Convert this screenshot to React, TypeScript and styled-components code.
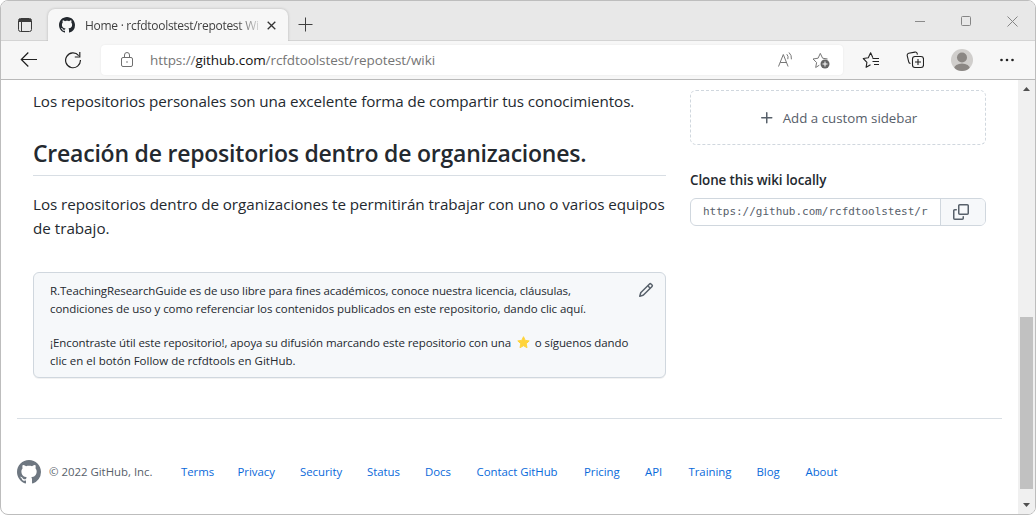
import React from "react";
import styled, { createGlobalStyle } from "styled-components";

const ui = `"Segoe UI", "Open Sans", "Noto Sans", sans-serif`;

const GlobalStyle = createGlobalStyle`
  * { box-sizing: border-box; }
  body { margin: 0; background: #fff; font-family: ${ui}; }
`;

const Window = styled.div`
  display: flex;
  flex-direction: column;
  width: 1036px;
  height: 515px;
  border: 1px solid #bdbdbd;
  border-radius: 8px;
  overflow: hidden;
  background: #fff;
`;

const TitleBar = styled.header`
  display: flex;
  align-items: flex-end;
  height: 40px;
  background: #e8e8e8;
  border-bottom: 1px solid #d4d4d4;
`;

const TabActions = styled.div`
  width: 47px;
  height: 100%;
  padding: 16px 0 0 16px;
  svg { display: block; }
`;

const Tab = styled.div`
  display: flex;
  align-items: center;
  width: 240px;
  height: 32px;
  margin-bottom: -1px;
  padding: 0 11px 0 11px;
  border-radius: 7px 7px 0 0;
  background: #f7f7f7;
  box-shadow: 0 0 3px rgba(0, 0, 0, 0.22);
  clip-path: inset(-4px -4px 0 -4px);
`;

const TabTitle = styled.span`
  width: 174px;
  margin: 0 8px 0 10px;
  white-space: nowrap;
  font-size: 12px;
  letter-spacing: -0.28px;
  color: #404040;
  mask-image: linear-gradient(90deg, #000 152px, transparent 178px);
`;

const NewTab = styled.div`
  display: flex;
  height: 100%;
  padding: 16px 0 0 10px;
`;

const Caption = styled.div`
  display: flex;
  gap: 36px;
  height: 100%;
  margin-left: auto;
  padding: 15px 17px 0 0;
`;

const Toolbar = styled.div`
  display: flex;
  align-items: center;
  flex: none;
  height: 39px;
  padding: 0 20px 1px 19px;
  background: #f7f7f7;
  border-bottom: 1px solid #b9b9b9;
`;

const NavButtons = styled.div`
  display: flex;
  gap: 26px;
  width: 81px;
`;

const AddressBar = styled.div`
  display: flex;
  align-items: center;
  width: 742px;
  height: 30px;
  padding: 0 13px 0 18px;
  border-radius: 4px;
  background: #fff;
  box-shadow: 0 0 2px rgba(0, 0, 0, 0.08);
`;

const Url = styled.div`
  flex: 1;
  margin-left: 15px;
  font-size: 13.5px;
  letter-spacing: -0.08px;
  color: #757575;
  b { font-weight: 400; color: #111; }
`;

const AddressIcons = styled.div`
  display: flex;
  gap: 17px;
`;

const ToolbarIcons = styled.div`
  display: flex;
  align-items: center;
  justify-content: space-between;
  flex: 1;
  margin-left: 19px;
`;

const Viewport = styled.div`
  display: flex;
  flex: 1;
  min-height: 0;
`;

const Page = styled.main`
  flex: 1;
  padding: 10px 16px 0;
  color: #24292f;
`;

const Wiki = styled.div`
  display: flex;
  gap: 24px;
  height: 328px;
  padding: 0 16px;
`;

const Article = styled.article`
  width: 633px;
  margin-top: -1px;
`;

const Paragraph = styled.p<{ $track?: number }>`
  margin: 0;
  font-size: 15.2px;
  line-height: 24px;
  white-space: nowrap;
  letter-spacing: ${(p) => p.$track ?? 0}px;
`;

const Heading = styled.h2`
  margin: 25px 0 16px;
  padding-bottom: 7px;
  border-bottom: 1px solid #d8dee4;
  font-size: 23px;
  font-weight: 600;
  line-height: 30px;
  letter-spacing: -0.22px;
  white-space: nowrap;
`;

const Note = styled.section`
  display: flex;
  justify-content: space-between;
  height: 106px;
  margin-top: 32px;
  padding: 9px 11px 0 16px;
  border: 1px solid #d0d7de;
  border-radius: 6px;
  background: #f6f8fa;
  box-shadow: 0 1px 0 rgba(27, 31, 36, 0.06);
`;

const NoteText = styled.p`
  margin: 0 0 16px;
  font-size: 11.5px;
  line-height: 18px;
  white-space: nowrap;
`;

const Line = styled.span<{ $track: number }>`
  display: block;
  letter-spacing: ${(p) => p.$track}px;
  svg { display: inline-block; margin: 0 2px 0 3px; vertical-align: -2px; }
`;

const Sidebar = styled.aside`
  width: 296px;
`;

const AddSidebar = styled.div`
  display: flex;
  align-items: center;
  justify-content: center;
  gap: 8px;
  height: 55px;
  color: #57606a;
  font-size: 13.3px;
  border: 1px dashed #d0d7de;
  border-radius: 6px;
`;

const SidebarTitle = styled.h5`
  margin: 25px 0 8px;
  font-size: 13.4px;
  line-height: 20px;
  font-weight: 600;
  letter-spacing: -0.08px;
`;

const CloneField = styled.div`
  display: flex;
  height: 28px;
  border: 1px solid #d0d7de;
  border-radius: 6px;
  overflow: hidden;
`;

const CloneUrl = styled.div`
  flex: 1;
  padding-left: 12px;
  font: 11px/26px "DejaVu Sans Mono", monospace;
  letter-spacing: -0.02px;
  color: #57606a;
`;

const CopyButton = styled.div`
  display: flex;
  align-items: center;
  width: 45px;
  padding-left: 12px;
  border-left: 1px solid #d0d7de;
  background: #f6f8fa;
`;

const Footer = styled.footer`
  display: flex;
  align-items: center;
  height: 107px;
  border-top: 1px solid #d8dee4;
  font-size: 11.4px;
  color: #57606a;
`;

const Copyright = styled.span`
  width: 132px;
  margin-left: 8px;
  padding-bottom: 2px;
  white-space: nowrap;
`;

const FooterLink = styled.a<{ $w: number }>`
  width: ${(p) => p.$w}px;
  padding-bottom: 2px;
  color: #0969da;
  letter-spacing: -0.03px;
  white-space: nowrap;
`;

const Scrollbar = styled.div`
  display: flex;
  flex-direction: column;
  align-items: center;
  justify-content: space-between;
  width: 17px;
  padding: 7px 0;
  background: #f0f0f0;
`;

const Thumb = styled.div`
  width: 13px;
  height: 172px;
  margin-top: 212px;
  background: #c1c1c1;
`;

const GITHUB =
  "M8 0C3.58 0 0 3.58 0 8c0 3.54 2.29 6.53 5.47 7.59.4.07.55-.17.55-.38 0-.19-.01-.82-.01-1.49-2.01.37-2.53-.49-2.69-.94-.09-.23-.48-.94-.82-1.13-.28-.15-.68-.52-.01-.53.63-.01 1.08.58 1.23.82.72 1.21 1.87.87 2.33.66.07-.52.28-.87.51-1.07-1.78-.2-3.64-.89-3.64-3.95 0-.87.31-1.59.82-2.15-.08-.2-.36-1.02.08-2.12 0 0 .67-.21 2.2.82.64-.18 1.32-.27 2-.27.68 0 1.36.09 2 .27 1.53-1.04 2.2-.82 2.2-.82.44 1.1.16 1.92.08 2.12.51.56.82 1.27.82 2.15 0 3.07-1.87 3.75-3.65 3.95.29.25.54.73.54 1.48 0 1.07-.01 1.93-.01 2.2 0 .21.15.46.55.38A8.013 8.013 0 0016 8c0-4.42-3.58-8-8-8z";

const IconBox = styled.svg`
  flex: none;
`;

const Octicon = ({ d, size = 16, color }: { d: string; size?: number; color: string }) => (
  <IconBox width={size} height={size} viewBox="0 0 16 16" fill={color} fillRule="evenodd">
    <path d={d} />
  </IconBox>
);

const PENCIL =
  "M11.013 1.427a1.75 1.75 0 012.474 0l1.086 1.086a1.75 1.75 0 010 2.474l-8.61 8.61c-.21.21-.47.364-.756.445l-3.251.93a.75.75 0 01-.927-.928l.929-3.25a1.75 1.75 0 01.445-.758l8.61-8.61zm1.414 1.06a.25.25 0 00-.354 0L10.811 3.75l1.439 1.44 1.263-1.263a.25.25 0 000-.354l-1.086-1.086zM11.189 6.25L9.75 4.81l-6.286 6.287a.25.25 0 00-.064.108l-.558 1.953 1.953-.558a.249.249 0 00.108-.064l6.286-6.286z";
const COPY =
  "M0 6.75C0 5.784.784 5 1.75 5h1.5a.75.75 0 010 1.5h-1.5a.25.25 0 00-.25.25v7.5c0 .138.112.25.25.25h7.5a.25.25 0 00.25-.25v-1.5a.75.75 0 011.5 0v1.5A1.75 1.75 0 019.25 16h-7.5A1.75 1.75 0 010 14.25v-7.5z M5 1.75C5 .784 5.784 0 6.75 0h7.5C15.216 0 16 .784 16 1.75v7.5A1.75 1.75 0 0114.25 11h-7.5A1.75 1.75 0 015 9.25v-7.5zm1.75-.25a.25.25 0 00-.25.25v7.5c0 .138.112.25.25.25h7.5a.25.25 0 00.25-.25v-7.5a.25.25 0 00-.25-.25h-7.5z";
const PLUS =
  "M7.75 2a.75.75 0 01.75.75V7h4.25a.75.75 0 110 1.5H8.5v4.25a.75.75 0 11-1.5 0V8.5H2.75a.75.75 0 010-1.5H7V2.75A.75.75 0 017.75 2z";

const STAR = "M8 2.2l1.7 3.7 4 .5-3 2.8.8 4L8 11.2l-3.5 2 .8-4-3-2.8 4-.5z";

const links: [string, number][] = [
  ["Terms", 56.5], ["Privacy", 62.5], ["Security", 67], ["Status", 58], ["Docs", 51.5],
  ["Contact GitHub", 107.5], ["Pricing", 61], ["API", 43.5], ["Training", 68], ["Blog", 49], ["About", 40],
];

export default function App() {
  return (
    <>
      <GlobalStyle />
      <Window>
        <TitleBar>
          <TabActions>
            <svg width="16" height="16" viewBox="0 0 16 16" fill="none" stroke="#3b3b3b">
              <rect x="1.5" y="1.5" width="13" height="13" rx="2" />
              <path d="M2 2.5h12M2 3.5h12M2 4.5h12" strokeWidth="1.1" />
              <path d="M4.5 5v9" />
            </svg>
          </TabActions>
          <Tab>
            <Octicon d={GITHUB} color="#24292f" />
            <TabTitle>Home · rcfdtoolstest/repotest Wi</TabTitle>
            <svg width="9" height="9" viewBox="0 0 9 9" stroke="#333" strokeWidth="1.3">
              <path d="M.7.7l7.6 7.6M8.3.7L.7 8.3" />
            </svg>
          </Tab>
          <NewTab>
            <svg width="15" height="15" viewBox="0 0 15 15" stroke="#3f3f3f">
              <path d="M7.5.5v14M.5 7.5h14" />
            </svg>
          </NewTab>
          <Caption>
            <svg width="10" height="11" viewBox="0 0 10 11" stroke="#8a8a8a"><path d="M0 5.5h10" /></svg>
            <svg width="10" height="10" viewBox="0 0 10 10" fill="none" stroke="#858585"><rect x=".5" y=".5" width="9" height="9" rx="1" /></svg>
            <svg width="11" height="11" viewBox="0 0 11 11" stroke="#858585"><path d="M.5.5l10 10M10.5.5l-10 10" /></svg>
          </Caption>
        </TitleBar>
        <Toolbar>
          <NavButtons>
            <svg width="18" height="18" viewBox="0 0 18 18" fill="none" stroke="#222" strokeWidth="1.2">
              <path d="M17 8.5H2M8.3 1.5l-7 7 7 7" />
            </svg>
            <svg width="18" height="18" viewBox="0 0 18 18" fill="none" stroke="#222" strokeWidth="1.2">
              <path d="M16.4 9A7.4 7.4 0 1 1 14.7 4.6M15.8 1v5h-5" />
            </svg>
          </NavButtons>
          <AddressBar>
            <svg width="16" height="18" viewBox="0 0 16 18" fill="none" stroke="#6f6f6f">
              <rect x="2.5" y="6.5" width="11" height="9" rx="1.5" />
              <path d="M5.5 6.5V4a2.5 2.5 0 015 0v2.5" />
              <circle cx="8" cy="11" r=".8" fill="#6f6f6f" stroke="none" />
            </svg>
            <Url>https://<b>github.com</b>/rcfdtoolstest/repotest/wiki</Url>
            <AddressIcons>
              <svg width="18" height="18" viewBox="0 0 18 18" fill="none" stroke="#777">
                <path d="M1.5 15.5L6.3 3.5l4.8 12M3.2 11.5h6.2M9.8 3.2a5 5 0 011 5M12 1.5a8 8 0 012.4 6.8" />
              </svg>
              <svg width="18" height="18" viewBox="0 0 18 18" fill="none" stroke="#777">
                <path d="M7.3 14.2l-3.6 2.3.9-5L1 8l5.1-.8 2.2-4.8 2.3 4.8 5 .8" strokeLinejoin="round" />
                <circle cx="13" cy="13" r="4.5" fill="#666" stroke="none" />
                <path d="M13 10.5v5M10.5 13h5" stroke="#fff" />
              </svg>
            </AddressIcons>
          </AddressBar>
          <ToolbarIcons>
            <svg width="18" height="18" viewBox="0 0 18 18" fill="none" stroke="#222" strokeWidth="1.1">
              <path d="M8.5 13.8l-4.4 2.5.8-5L1.3 7.5l5-.8 2.3-4.9 2.3 4.9M10.5 7.5H17M10.5 10.5h6.5M12 13.5h5" strokeLinejoin="round" />
            </svg>
            <svg width="18" height="18" viewBox="0 0 18 18" fill="none" stroke="#222" strokeWidth="1.1">
              <path d="M4.5 12.5a2 2 0 01-1.8-1.6L1.2 4.7a2 2 0 011.5-2.4l6.2-1.2a2 2 0 012.3 1.4l.2 1.2" />
              <rect x="6.5" y="5.5" width="11" height="11" rx="2.5" fill="#f7f7f7" />
              <path d="M12 8v6M9 11h6" />
            </svg>
            <svg width="22" height="22" viewBox="0 0 22 22">
              <clipPath id="avatar"><circle cx="11" cy="11" r="11" /></clipPath>
              <g clipPath="url(#avatar)">
                <rect width="22" height="22" fill="#d0cecc" />
                <circle cx="11" cy="8.5" r="5" fill="#8b8784" />
                <ellipse cx="11" cy="20" rx="8" ry="5.5" fill="#8b8784" />
              </g>
            </svg>
            <svg width="16" height="4" viewBox="0 0 16 4" fill="#222">
              <circle cx="2.5" cy="2" r="1.3" /><circle cx="8" cy="2" r="1.3" /><circle cx="13.5" cy="2" r="1.3" />
            </svg>
          </ToolbarIcons>
        </Toolbar>
        <Viewport>
          <Page>
            <Wiki>
              <Article>
                <Paragraph $track={-0.075}>Los repositorios personales son una excelente forma de compartir tus conocimientos.</Paragraph>
                <Heading>Creación de repositorios dentro de organizaciones.</Heading>
                <Paragraph $track={-0.045}>Los repositorios dentro de organizaciones te permitirán trabajar con uno o varios equipos</Paragraph>
                <Paragraph>de trabajo.</Paragraph>
                <Note>
                  <div>
                    <NoteText>
                      <Line $track={-0.11}>R.TeachingResearchGuide es de uso libre para fines académicos, conoce nuestra licencia, cláusulas,</Line>
                      <Line $track={-0.06}>condiciones de uso y como referenciar los contenidos publicados en este repositorio, dando clic aquí.</Line>
                    </NoteText>
                    <NoteText>
                      <Line $track={-0.09}>
                        ¡Encontraste útil este repositorio!, apoya su difusión marcando este repositorio con una{" "}
                        <svg width="13" height="13" viewBox="1.5 1.5 13 13" fill="#ffd43b"><path d={STAR} stroke="#ffd43b" strokeLinejoin="round" /></svg>
                        {" "}o síguenos dando
                      </Line>
                      <Line $track={0}>clic en el botón Follow de rcfdtools en GitHub.</Line>
                    </NoteText>
                  </div>
                  <Octicon d={PENCIL} color="#57606a" />
                </Note>
              </Article>
              <Sidebar>
                <AddSidebar>
                  <Octicon d={PLUS} color="#57606a" />
                  Add a custom sidebar
                </AddSidebar>
                <SidebarTitle>Clone this wiki locally</SidebarTitle>
                <CloneField>
                  <CloneUrl>https://github.com/rcfdtoolstest/r</CloneUrl>
                  <CopyButton><Octicon d={COPY} color="#57606a" /></CopyButton>
                </CloneField>
              </Sidebar>
            </Wiki>
            <Footer>
              <Octicon d={GITHUB} size={24} color="#6e7781" />
              <Copyright>© 2022 GitHub, Inc.</Copyright>
              {links.map(([label, w]) => <FooterLink key={label} $w={w}>{label}</FooterLink>)}
            </Footer>
          </Page>
          <Scrollbar>
            <svg width="7" height="4" viewBox="0 0 7 4" fill="#505050"><path d="M3.5 0L7 4H0z" /></svg>
            <Thumb />
            <svg width="7" height="4" viewBox="0 0 7 4" fill="#505050"><path d="M0 0h7L3.5 4z" /></svg>
          </Scrollbar>
        </Viewport>
      </Window>
    </>
  );
}
